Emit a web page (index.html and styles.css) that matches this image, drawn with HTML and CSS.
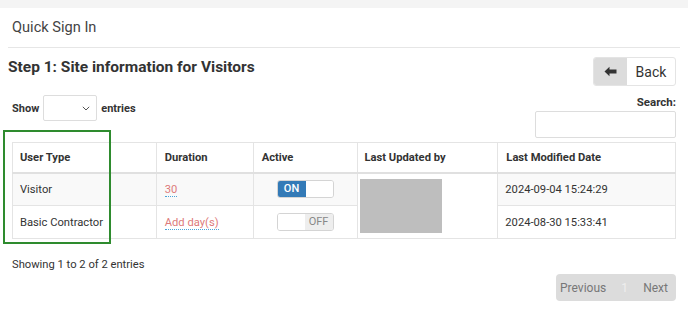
FILE: index.html
```html
<!DOCTYPE html>
<html lang="en">
<head>
  <meta charset="UTF-8">
  <title>Quick Sign In</title>
  <link rel="stylesheet" href="styles.css">
</head>
<body>

  <div class="top-strip"></div>

  <div class="page-title">Quick Sign In</div>

  <div class="content">
    <div class="step-row">
      <h2>Step 1: Site information for Visitors</h2>
      <a href="#" class="back-btn">
        <span class="back-icon">
          <svg width="13" height="11" viewBox="0 0 13 11"><path d="M0.5 5.5 L5.5 0.8 L5.5 3.6 L12.5 3.6 L12.5 7.4 L5.5 7.4 L5.5 10.2 Z" fill="#333"/></svg>
        </span>
        <span class="back-text">Back</span>
      </a>
    </div>

    <div class="controls-row">
      <div class="length-ctl">
        <span>Show</span>
        <div class="select-box">
          <svg width="8" height="5" viewBox="0 0 8 5"><path d="M0.8 0.8 L4 4 L7.2 0.8" fill="none" stroke="#555" stroke-width="1"/></svg>
        </div>
        <span>entries</span>
      </div>
      <div class="search-ctl">
        <label for="search">Search:</label>
        <input type="text" id="search">
      </div>
    </div>

    <div class="table-wrap">
      <table class="data-table">
        <thead>
          <tr>
            <th class="c1">User Type</th>
            <th class="c2">Duration</th>
            <th class="c3">Active</th>
            <th class="c4">Last Updated by</th>
            <th class="c5">Last Modified Date</th>
          </tr>
        </thead>
        <tbody>
          <tr class="odd">
            <td>Visitor</td>
            <td><a href="#" class="editable">30</a></td>
            <td class="switch-cell">
              <div class="switch on"><span class="on-part">ON</span><span class="blank"></span></div>
            </td>
            <td rowspan="2" class="redact-cell"><div class="redacted"></div></td>
            <td>2024-09-04 15:24:29</td>
          </tr>
          <tr>
            <td>Basic Contractor</td>
            <td><a href="#" class="editable">Add day(s)</a></td>
            <td class="switch-cell">
              <div class="switch off"><span class="blank"></span><span class="off-part">OFF</span></div>
            </td>
            <td>2024-08-30 15:33:41</td>
          </tr>
        </tbody>
      </table>
      <div class="highlight"></div>
    </div>

    <div class="footer-row">
      <div class="info">Showing 1 to 2 of 2 entries</div>
      <div class="pager">
        <span class="prev">Previous</span>
        <span class="current">1</span>
        <span class="next">Next</span>
      </div>
    </div>
  </div>

</body>
</html>
```

FILE: styles.css
```css
* {
  margin: 0;
  padding: 0;
  box-sizing: border-box;
}

body {
  font-family: Roboto, 'Liberation Sans', Arial, sans-serif;
  background: #fff;
  color: #333;
  width: 688px;
}

.top-strip {
  height: 8px;
  background: #f4f4f4;
}

.page-title {
  margin: 0 8px;
  padding-left: 4px;
  height: 40px;
  line-height: 39px;
  font-size: 14.6px;
  color: #444;
  border-bottom: 1px solid #e6e6e6;
}

.content {
  padding: 0 12px;
}

.step-row {
  display: flex;
  justify-content: space-between;
  align-items: flex-start;
  padding-top: 9px;
}

.step-row h2 {
  margin-left: -4px;
  margin-top: 0;
  font-size: 15.5px;
  line-height: 20px;
  font-weight: 700;
  color: #333;
}

.back-btn {
  display: flex;
  height: 29px;
  border: 1px solid #e4e4e4;
  border-radius: 3px;
  overflow: hidden;
  text-decoration: none;
  color: #333;
}

.back-icon {
  width: 33px;
  background: #dcdcdc;
  display: flex;
  align-items: center;
  justify-content: center;
}

.back-text {
  width: 48px;
  display: flex;
  align-items: center;
  justify-content: center;
  font-size: 14px;
}

.controls-row {
  display: flex;
  justify-content: space-between;
  align-items: flex-start;
  margin-top: 9px;
}

.length-ctl {
  display: flex;
  align-items: center;
  gap: 4px;
  font-size: 11px;
  font-weight: 700;
  color: #333;
}

.select-box {
  width: 54px;
  height: 26px;
  border: 1px solid #ddd;
  border-radius: 2px;
  display: flex;
  align-items: center;
  justify-content: flex-end;
  padding-right: 6px;
}

.search-ctl {
  display: flex;
  flex-direction: column;
  align-items: flex-end;
}

.search-ctl label {
  font-size: 11.5px;
  font-weight: 700;
  line-height: 14px;
  color: #333;
}

.search-ctl input {
  margin-top: 2px;
  width: 141px;
  height: 27px;
  border: 1px solid #ddd;
  border-radius: 2px;
  outline: none;
}

.table-wrap {
  position: relative;
  margin-top: 4px;
}

.data-table {
  width: 664px;
  border-collapse: collapse;
  font-size: 11.2px;
  color: #333;
}

.data-table th,
.data-table td {
  border: 1px solid #e4e4e4;
  text-align: left;
  vertical-align: middle;
}

.data-table th {
  height: 30px;
  padding: 0 7px;
  font-weight: 700;
  border-bottom: 2px solid #e0e0e0;
}

.data-table td {
  height: 33px;
  padding: 0 7px;
}

.data-table th.c1 { width: 144px; }
.data-table th.c2 { width: 97px; }
.data-table th.c3 { width: 104px; }
.data-table th.c4 { width: 141px; }
.data-table th.c5 { width: 178px; padding-left: 8px; }

.data-table td:nth-child(2),
.data-table th.c2,
.data-table th.c3 {
  padding-left: 8px;
}

.data-table tr.odd td {
  background: #f9f9f9;
}

.data-table tr.odd td.redact-cell {
  background: #fff;
}

.editable {
  color: #dd7a7a;
  text-decoration: none;
  border-bottom: 1px dotted #4aa3d8;
}

.data-table td.switch-cell {
  text-align: center;
  padding: 0;
}

.switch {
  display: inline-flex;
  width: 57px;
  height: 18px;
  border: 1px solid #d4d4d4;
  border-radius: 3px;
  overflow: hidden;
  vertical-align: middle;
  font-size: 11px;
  line-height: 16px;
}

.switch .on-part {
  width: 28px;
  background: #337ab7;
  color: #fff;
  font-weight: 500;
  text-align: center;
}

.switch .off-part {
  width: 28px;
  background: #eee;
  color: #888;
  text-align: center;
}

.switch .blank {
  flex: 1;
  background: #fff;
}

.data-table td.redact-cell {
  padding: 0;
}

.redacted {
  margin-left: 2px;
  width: 82px;
  height: 54px;
  background: #bebebe;
}

.highlight {
  position: absolute;
  left: -9px;
  top: -12px;
  width: 108px;
  height: 114px;
  border: 2px solid #2e8b2e;
}

.footer-row {
  display: flex;
  justify-content: space-between;
  align-items: flex-start;
}

.info {
  padding-top: 19px;
  font-size: 11.2px;
  color: #333;
}

.pager {
  margin-top: 35px;
  height: 27px;
  width: 120px;
  background: #dcdcdc;
  border-radius: 4px;
  display: flex;
  align-items: center;
  padding: 0 8px 0 4px;
  font-size: 12px;
  color: #777;
}

.pager .current {
  color: #eee;
  margin-left: 15px;
}

.pager .next {
  margin-left: auto;
}
```
